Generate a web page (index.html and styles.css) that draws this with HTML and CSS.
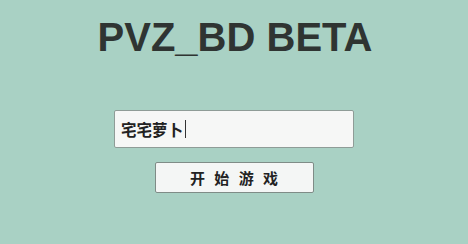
FILE: index.html
```html
<!DOCTYPE html>
<html>
<head>
<meta charset="utf-8">
<link rel="stylesheet" href="styles.css">
</head>
<body>
<div class="page">
  <h1 class="title">PVZ_BD BETA</h1>
  <div class="form">
    <div class="field"><span class="val">宅宅萝卜</span><span class="caret"></span></div>
    <div class="btn">开 始 游 戏</div>
  </div>
</div>
</body>
</html>
```
FILE: styles.css
```css
html, body { margin: 0; padding: 0; }
body {
  width: 468px; height: 244px; overflow: hidden;
  background: #a9d1c4;
  font-family: "Liberation Sans", "Noto Sans CJK SC", sans-serif;
}
.page { display: flex; flex-direction: column; align-items: center; }
.title {
  margin: 14px 0 0 0;
  font-size: 40px; line-height: 46px; font-weight: bold;
  color: #2f3432;
  padding-left: 2px;
}
.form { margin-top: 50px; display: flex; flex-direction: column; align-items: center; }
.field {
  box-sizing: border-box;
  width: 240px; height: 38px;
  background: #f6f7f6;
  border: 1px solid #8f9c97;
  border-radius: 2px;
  display: flex; align-items: center;
  padding-left: 6px;
  font-size: 15.5px; font-weight: bold; color: #222;
  font-family: "Noto Sans CJK SC", sans-serif;
}
.caret { display: inline-block; width: 1px; height: 18px; background: #333; margin-left: 2px; }
.btn {
  box-sizing: border-box;
  margin-top: 14px;
  width: 159px; height: 31px;
  background: #f4f6f5;
  border: 1px solid #7f8c87;
  border-radius: 2px;
  display: flex; align-items: center; justify-content: center;
  font-size: 15px; font-weight: bold; color: #222;
  font-family: "Noto Sans CJK SC", sans-serif;
  letter-spacing: 3px; text-indent: 3px;
}
```
